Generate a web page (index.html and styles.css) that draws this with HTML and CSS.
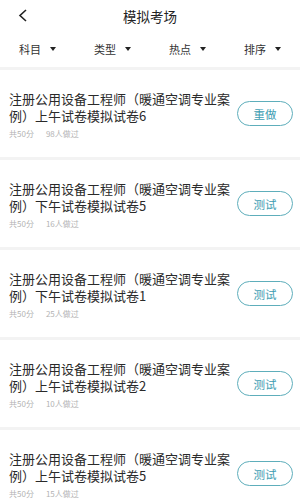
FILE: index.html
```html
<!DOCTYPE html>
<html lang="zh">
<head>
<meta charset="utf-8">
<link rel="stylesheet" href="styles.css">
</head>
<body>
<header class="header">
  <div class="topbar">
    <svg class="back" width="10" height="13" viewBox="0 0 10 13"><path d="M8 1 L2 6.5 L8 12" fill="none" stroke="#222" stroke-width="1.6"/></svg>
    <div class="title">模拟考场</div>
  </div>
  <div class="filters">
    <div class="filter"><span>科目</span><i class="caret"></i></div>
    <div class="filter"><span>类型</span><i class="caret"></i></div>
    <div class="filter"><span>热点</span><i class="caret"></i></div>
    <div class="filter"><span>排序</span><i class="caret"></i></div>
  </div>
</header>
<main class="list">
  <div class="card">
    <div class="info">
      <div class="name">注册公用设备工程师（暖通空调专业案例）上午试卷模拟试卷6</div>
      <div class="meta"><span>共50分</span><span>98人做过</span></div>
    </div>
    <div class="btn">重做</div>
  </div>
  <div class="card">
    <div class="info">
      <div class="name">注册公用设备工程师（暖通空调专业案例）下午试卷模拟试卷5</div>
      <div class="meta"><span>共50分</span><span>16人做过</span></div>
    </div>
    <div class="btn">测试</div>
  </div>
  <div class="card">
    <div class="info">
      <div class="name">注册公用设备工程师（暖通空调专业案例）下午试卷模拟试卷1</div>
      <div class="meta"><span>共50分</span><span>25人做过</span></div>
    </div>
    <div class="btn">测试</div>
  </div>
  <div class="card">
    <div class="info">
      <div class="name">注册公用设备工程师（暖通空调专业案例）上午试卷模拟试卷2</div>
      <div class="meta"><span>共50分</span><span>10人做过</span></div>
    </div>
    <div class="btn">测试</div>
  </div>
  <div class="card">
    <div class="info">
      <div class="name">注册公用设备工程师（暖通空调专业案例）上午试卷模拟试卷5</div>
      <div class="meta"><span>共50分</span><span>15人做过</span></div>
    </div>
    <div class="btn">测试</div>
  </div>
</main>
</body>
</html>
```
FILE: styles.css
```css
* { box-sizing: border-box; margin: 0; padding: 0; }
html, body { background: #fff; }
body {
  margin: 0;
  width: 300px;
  height: 500px;
  overflow: hidden;
  font-family: "Noto Sans CJK SC", "Noto Sans", sans-serif;
  color: #222;
}
.header { height: 67px; background: #fff; }
.topbar {
  position: relative;
  height: 31px;
  display: flex;
  align-items: center;
  justify-content: center;
}
.back { position: absolute; left: 18px; top: 9px; }
.title { font-size: 13.5px; line-height: 18px; color: #222; }
.filters {
  display: grid;
  grid-template-columns: repeat(4, 1fr);
  height: 36px;
  align-items: center;
}
.filter {
  display: flex;
  align-items: center;
  justify-content: center;
  gap: 9px;
  font-size: 11px;
  color: #333;
  padding-bottom: 1px;
}
.caret {
  width: 0; height: 0;
  border-left: 3.5px solid transparent;
  border-right: 3.5px solid transparent;
  border-top: 4px solid #222;
}
.card {
  border-top: 3px solid #f3f3f3;
  height: 90px;
  display: flex;
  align-items: center;
  padding: 0 7px 0 9px;
  gap: 5px;
}
.info { flex: 1; min-width: 0; padding-top: 1px; }
.name { font-size: 13px; line-height: 17px; color: #2a2a2a; }
.meta {
  margin-top: 5px;
  display: flex;
  gap: 12px;
  font-size: 8px;
  line-height: 10px;
  color: #b3b3b3;
}
.btn {
  width: 56px;
  height: 25px;
  border: 1px solid #5eaebb;
  border-radius: 13px;
  display: flex;
  align-items: center;
  justify-content: center;
  font-size: 11.5px;
  color: #3d9db2;
  flex: none;
}
```
